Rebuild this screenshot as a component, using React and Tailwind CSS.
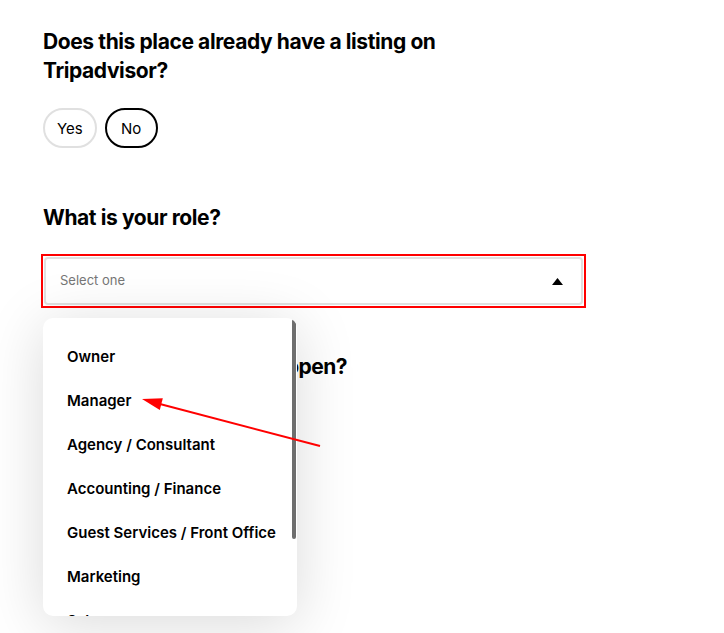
const roles = [
  "Owner",
  "Manager",
  "Agency / Consultant",
  "Accounting / Finance",
  "Guest Services / Front Office",
  "Marketing",
  "Sales",
  "Revenue Management",
];

function Pill({ children, active }) {
  return (
    <button
      type="button"
      className={`flex h-[40px] min-w-[53px] items-center justify-center px-[12px] rounded-full border-2 text-[15px] leading-none text-black ${
        active ? "border-black" : "border-[#e0e0e0]"
      }`}
    >
      {children}
    </button>
  );
}

export default function App() {
  return (
    <div className="relative min-h-screen w-[724px] overflow-hidden bg-white font-['Inter',sans-serif] text-black">
      <div className="px-[43px] pt-[27px]">
        <h2 className="w-[470px] text-[21px] font-bold leading-[29px] tracking-[-0.4px]">
          Does this place already have a listing on Tripadvisor?
        </h2>

        <div className="mt-[23px] flex gap-2">
          <Pill>Yes</Pill>
          <Pill active>No</Pill>
        </div>

        <h2 className="mt-[55px] text-[21px] font-bold leading-[29px] tracking-[-0.4px]">What is your role?</h2>

        {/* Select (highlighted) */}
        <div className="relative mt-[22px] w-[545px] -ml-[2px]">
          <div className="border-2 border-[#ff0000] p-px">
            <div className="flex h-[48px] items-center justify-between rounded-[4px] border-2 border-[#e0e0e0] px-[14px]">
              <span className="text-[13px] text-[#767676]">Select one</span>
              <svg width="11" height="7" viewBox="0 0 11 7" className="mr-[4px]">
                <path d="M0 7 L5.5 0 L11 7 Z" fill="#000" />
              </svg>
            </div>
          </div>

          {/* Dropdown */}
          <div className="absolute left-[2px] top-[64px] z-10 w-[254px]">
            <div className="absolute left-[27px] -top-[7px] h-0 w-0 border-x-[7px] border-b-[7px] border-x-transparent border-b-white" />
            <div className="relative h-[298px] overflow-hidden rounded-[10px] bg-white shadow-[0_8px_60px_rgba(0,0,0,0.15)]">
              <ul className="pt-[17px]">
                {roles.map((r) => (
                  <li key={r} className="flex h-[44px] items-center whitespace-nowrap px-[24px] text-[15px] font-semibold text-black">
                    {r}
                  </li>
                ))}
              </ul>
              <div className="absolute right-[1px] top-[1px] h-[220px] w-[4px] rounded-full bg-[#6e6e6e]" />
            </div>
          </div>
        </div>

        <h2 className="mt-[44px] text-[21px] font-bold leading-[29px] tracking-[-0.6px]">Is this property currently open?</h2>
        <div className="mt-[23px] flex gap-2">
          <Pill>Yes</Pill>
          <Pill>No</Pill>
        </div>
      </div>

      {/* Annotation arrow */}
      <svg className="pointer-events-none absolute left-0 top-0 z-20" width="724" height="633">
        <line x1="320" y1="446" x2="158" y2="403.5" stroke="#ff0000" strokeWidth="2" />
        <polygon points="142,399 162.8,398.3 159.8,409.9" fill="#ff0000" />
      </svg>
    </div>
  );
}
